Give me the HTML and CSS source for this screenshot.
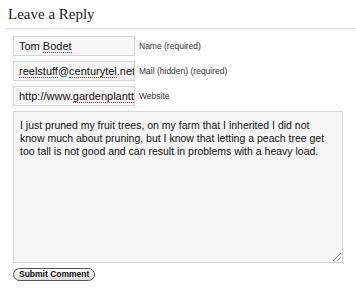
FILE: index.html
```html
<!DOCTYPE html>
<html lang="en">
<head>
  <meta charset="UTF-8">
  <title>Leave a Reply</title>
  <link rel="stylesheet" href="styles.css">
</head>
<body>
  <h3 class="reply-title">Leave a Reply</h3>

  <form class="comment-form">
    <p class="row">
      <span class="field">Tom <span class="misspelled">Bodet</span></span>
      <label>Name (required)</label>
    </p>
    <p class="row">
      <span class="field"><span class="misspelled">reelstuff</span>@<span class="misspelled">centurytel</span>.net</span>
      <label>Mail (hidden) (required)</label>
    </p>
    <p class="row">
      <span class="field">http://www.<span class="misspelled">gardenplantt</span></span>
      <label>Website</label>
    </p>

    <div class="comment-box">I just pruned my fruit trees, on my farm that I inherited I did not know much about pruning, but I know that letting a peach tree get too tall is not good and can result in problems with a heavy load.<span class="grip"></span></div>

    <button type="button" class="submit">Submit Comment</button>
  </form>
</body>
</html>
```

FILE: styles.css
```css
body {
  margin: 0;
  padding: 0;
  background-color: #fff;
  color: #222;
  font-family: "Liberation Sans", Arial, sans-serif;
}
.reply-title {
  font-family: "Liberation Serif", Georgia, serif;
  font-weight: normal;
  font-size: 15px;
  color: #1a1a1a;
  margin: 0 0 0 5px;
  padding: 6px 0 5px 3px;
  line-height: 17px;
  border-bottom: 1px solid #e3e3e3;
}
.comment-form {
  padding: 7px 13px 0 13px;
}
.row {
  display: flex;
  align-items: center;
  margin: 0 0 5px 0;
}
.field {
  display: block;
  box-sizing: border-box;
  width: 122px;
  height: 20px;
  padding: 0 5px;
  border: 1px solid #d6d6d6;
  background-color: #f7f7f7;
  font-size: 11px;
  line-height: 18px;
  white-space: nowrap;
  overflow: hidden;
  color: #111;
}
.misspelled {
  border-bottom: 1px dotted #e02020;
}
.row label {
  margin-left: 4px;
  font-size: 8.5px;
  color: #333;
}
.comment-box {
  position: relative;
  box-sizing: border-box;
  width: 330px;
  height: 152px;
  padding: 7px 6px 5px 6px;
  border: 1px solid #d6d6d6;
  background-color: #f6f6f6;
  font-size: 10.5px;
  line-height: 13px;
  color: #111;
}
.grip {
  position: absolute;
  right: 1px;
  bottom: 1px;
  width: 8px;
  height: 8px;
  background: linear-gradient(135deg, transparent 45%, #999 45%, #999 55%, transparent 55%, transparent 70%, #999 70%, #999 80%, transparent 80%);
}
.submit {
  margin-top: 4px;
  padding: 0 5px;
  height: 13px;
  border: 1px solid #555;
  border-radius: 7px;
  background: linear-gradient(#fff, #ddd);
  font-family: "Liberation Sans", Arial, sans-serif;
  font-weight: bold;
  font-size: 8.5px;
  line-height: 11px;
  color: #111;
}
```
